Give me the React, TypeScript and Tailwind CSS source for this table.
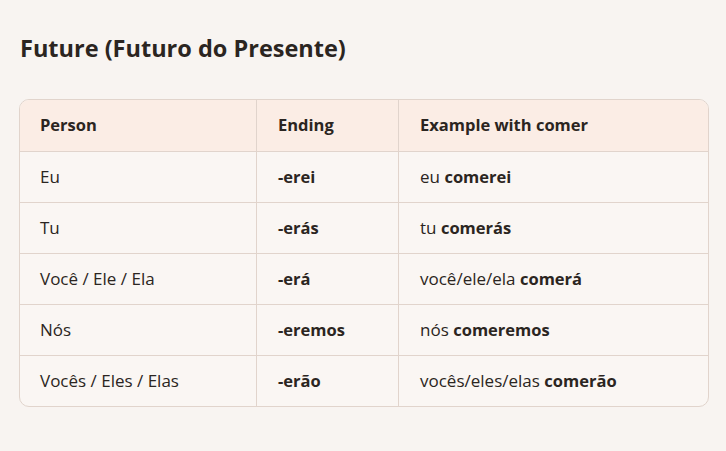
import React from "react";

const rows: [string, string, string, string][] = [
  ["Eu", "-erei", "eu", "comerei"],
  ["Tu", "-erás", "tu", "comerás"],
  ["Você / Ele / Ela", "-erá", "você/ele/ela", "comerá"],
  ["Nós", "-eremos", "nós", "comeremos"],
  ["Vocês / Eles / Elas", "-erão", "vocês/eles/elas", "comerão"],
];

export default function App() {
  return (
    <div
      className="w-[726px] h-[451px] bg-[#f8f4f1] text-[#2b2521] px-[19px] pt-[32px]"
      style={{ fontFamily: "'Open Sans', 'Noto Sans', sans-serif" }}
    >
      <h1 className="text-[23.5px] font-bold leading-[32px] ml-px">Future (Futuro do Presente)</h1>
      <div className="mt-[35px] w-[690px] rounded-[10px] border border-[#e1d4cc] overflow-hidden bg-[#faf6f3]">
        <div className="grid grid-cols-[237px_142px_1fr] bg-[#fbede5] h-[51px] items-stretch text-[16.5px] font-bold">
          <div className="flex items-center pl-[20px] border-r border-[#e1d4cc]">Person</div>
          <div className="flex items-center pl-[21px] border-r border-[#e1d4cc]">Ending</div>
          <div className="flex items-center pl-[21px]">Example with comer</div>
        </div>
        {rows.map(([p, e, pre, ex]) => (
          <div key={p} className="grid grid-cols-[237px_142px_1fr] h-[51px] border-t border-[#e1d4cc] text-[17px]">
            <div className="flex items-center pl-[20px] border-r border-[#e1d4cc]">{p}</div>
            <div className="flex items-center pl-[21px] border-r border-[#e1d4cc] font-bold text-[16.5px]">{e}</div>
            <div className="flex items-center pl-[21px] whitespace-pre">
              {pre} <b className="font-bold text-[16.5px]">{ex}</b>
            </div>
          </div>
        ))}
      </div>
    </div>
  );
}
